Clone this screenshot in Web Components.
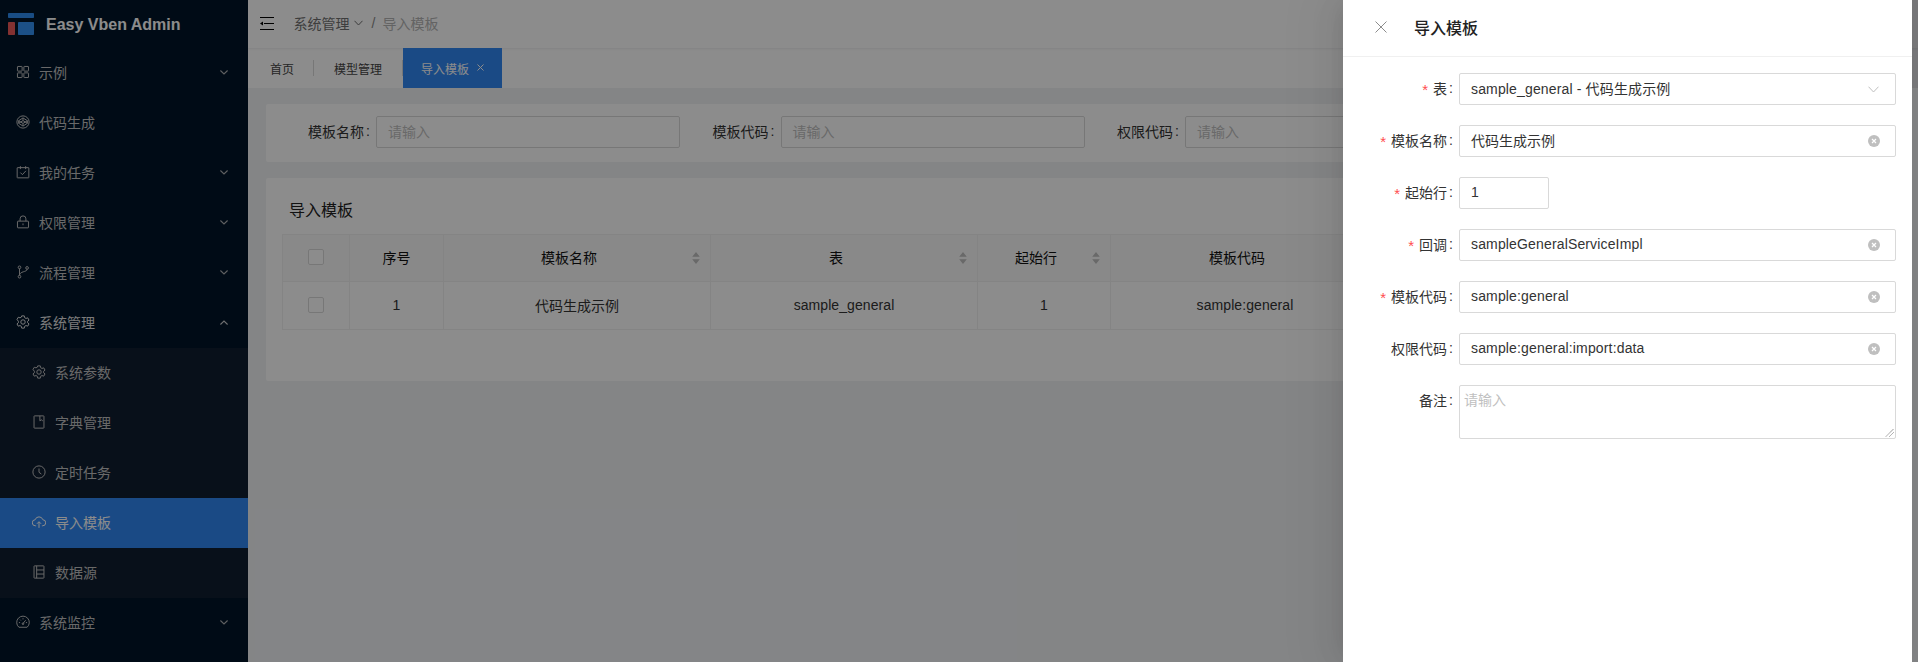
<!DOCTYPE html>
<html lang="zh-CN">
<head>
<meta charset="utf-8">
<title>导入模板</title>
<style>
html,body{margin:0;padding:0;height:662px;overflow:hidden}
body{font-family:"Liberation Sans","Noto Sans CJK SC",sans-serif;font-size:14px;color:rgba(0,0,0,.85)}
</style>
</head>
<body>
<x-app>
  <x-sidebar slot="side">
    <x-menu-item icon="apps" arrow="down">示例</x-menu-item>
    <x-menu-item icon="codepen">代码生成</x-menu-item>
    <x-menu-item icon="task" arrow="down">我的任务</x-menu-item>
    <x-menu-item icon="lock" arrow="down">权限管理</x-menu-item>
    <x-menu-item icon="branch" arrow="down">流程管理</x-menu-item>
    <x-menu-item icon="gear" arrow="up" open>系统管理</x-menu-item>
    <x-submenu>
      <x-menu-item sub icon="gear">系统参数</x-menu-item>
      <x-menu-item sub icon="book">字典管理</x-menu-item>
      <x-menu-item sub icon="clock">定时任务</x-menu-item>
      <x-menu-item sub active icon="cloud">导入模板</x-menu-item>
      <x-menu-item sub icon="table">数据源</x-menu-item>
    </x-submenu>
    <x-menu-item icon="gauge" arrow="down">系统监控</x-menu-item>
  </x-sidebar>
  <x-topbar slot="main"></x-topbar>
  <x-tabs slot="main"></x-tabs>
  <x-content slot="main">
    <x-search-card></x-search-card>
    <x-table-card></x-table-card>
  </x-content>
  <x-drawer slot="over" heading="导入模板">
    <x-field label="表" required><x-input spaced value="sample_general - 代码生成示例" end="chevron"></x-input></x-field>
    <x-field label="模板名称" required><x-input value="代码生成示例" end="clear"></x-input></x-field>
    <x-field label="起始行" required><x-input value="1" narrow></x-input></x-field>
    <x-field label="回调" required><x-input spaced value="sampleGeneralServiceImpl" end="clear"></x-input></x-field>
    <x-field label="模板代码" required><x-input spaced value="sample:general" end="clear"></x-input></x-field>
    <x-field label="权限代码"><x-input spaced value="sample:general:import:data" end="clear"></x-input></x-field>
    <x-field label="备注"><x-textarea placeholder="请输入"></x-textarea></x-field>
  </x-drawer>
</x-app>
<script>
const ICONS = {
  apps:'<rect x="2.500" y="2.500" width="8" height="8" rx=".8"/><rect x="13.500" y="2.500" width="8" height="8" rx=".8"/><rect x="2.500" y="13.500" width="8" height="8" rx=".8"/><rect x="13.500" y="13.500" width="8" height="8" rx=".8"/>',
  codepen:'<circle cx="12" cy="12" r="10.500"/><path d="M12 5l7.500 4.800v4.400L12 19l-7.500-4.800V9.800z"/><path d="M4.500 9.800L12 14.500l7.500-4.700M12 5v4.500L4.500 14.200M12 9.500l7.500 4.700M12 14.500V19"/>',
  task:'<rect x="2" y="4.500" width="20" height="17.500" rx=".6"/><path d="M7.500 2v5M16.500 2v5M7.500 13l3.500 3.500 6-6.500"/>',
  lock:'<rect x="2.500" y="10.500" width="19" height="11.500" rx="1"/><path d="M7 10.500V6.500a5 5 0 0 1 10 0v4M12 14.500v3"/>',
  branch:'<circle cx="6" cy="4" r="2.300"/><circle cx="6" cy="20" r="2.300"/><circle cx="19" cy="5" r="2.300"/><path d="M6 6.300v11.400M19 7.300c0 5-13 3.200-13 10.400"/>',
  gear:'<path d="M9.800 1.500h4.400l.6 3.100 2.300 1.300 3-1 2.200 3.800-2.400 2.100v2.400l2.400 2.100-2.200 3.800-3-1-2.300 1.300-.6 3.100H9.800l-.6-3.100-2.300-1.300-3 1-2.200-3.800 2.400-2.100v-2.400L1.700 7.700l2.200-3.800 3 1 2.300-1.300z"/><circle cx="12" cy="12" r="3.800"/>',
  book:'<rect x="3.500" y="1.500" width="17" height="21" rx=".8"/><path d="M13.500 1.500v8.500l2.500-1.800 2.500 1.800"/>',
  clock:'<circle cx="12" cy="12" r="10.500"/><path d="M12 6v6.500l4 3"/>',
  cloud:'<path d="M7 18.500H6A5.200 5.200 0 0 1 5.400 8.100 6.900 6.900 0 0 1 18.600 8.100 5.200 5.200 0 0 1 18 18.500h-1"/><path d="M12 22V12M8.500 15l3.500-3.500 3.500 3.500"/>',
  table:'<rect x="3.500" y="1.500" width="17" height="21" rx=".8"/><path d="M8 1.500v21M8 8.500h12.500M8 15.500h12.500"/>',
  gauge:'<path d="M5 21A10.800 10.800 0 1 1 19 21z"/><path d="M12 14.500l4.500-5.500M5 13h2M17 13h2M12 5.500v2M7 8l1.300 1.300"/><circle cx="12" cy="15" r="1.400"/>'
};
const STYLE_RESET = ':host,*{box-sizing:border-box}';
function define(name, css, html, init){
  customElements.define(name, class extends HTMLElement{
    connectedCallback(){
      if(this.shadowRoot) return;
      const r=this.attachShadow({mode:'open'});
      r.innerHTML='<style>'+STYLE_RESET+css+'</style>'+(typeof html==='function'?html(this):html);
      if(init) init(this,r);
    }
  });
}
const sorter='<svg width="8" height="12" viewBox="0 0 8 12" style="display:block"><path d="M4 0l3.800 4.800H.2zM4 12L.2 7.200h7.600z" fill="#bfbfbf"/></svg>';
define('x-app',`
  :host{display:block;position:relative;width:1918px;height:662px;overflow:hidden}
  .shell{display:flex;height:100%}
  .main{flex:1;min-width:0;display:flex;flex-direction:column;background:#f0f2f5}
  .mask{position:absolute;inset:0;background:rgba(0,0,0,.45)}
`,`<div class="shell"><slot name="side"></slot><div class="main"><slot name="main"></slot></div></div><div class="mask"></div><slot name="over"></slot>`);
define('x-sidebar',`
  :host{display:block;width:248px;flex:none;height:100%;background:#001529;overflow:hidden}
  .logo{height:48px;display:flex;align-items:center;padding-left:8px;gap:12px;color:#fff;font-size:16px;font-weight:700;white-space:nowrap}
  .logo span{position:relative;top:1px}
  svg{display:block}
`,`<div class="logo"><svg width="26" height="23" viewBox="0 0 26 23" style="margin-top:1px"><rect width="26" height="5" rx=".8" fill="#2f8cf0"/><rect y="9" width="7" height="13" rx=".8" fill="#ef5a5a"/><rect x="10" y="9" width="16" height="13" rx=".8" fill="#3392f5"/></svg><span>Easy Vben Admin</span></div><slot></slot>`);
define('x-submenu',`:host{display:block;background:#101e30}`,`<slot></slot>`);
define('x-menu-item',`
  :host{display:flex;align-items:center;height:50px;padding:0 20px 2px 16px;color:#c0c0c0;white-space:nowrap}
  :host([sub]){padding-left:32px}
  :host([open]){color:#e0e0e0}
  :host([active]){background:#3188f2;color:#fff}
  .i{width:14px;height:14px;flex:none;fill:none;stroke:currentColor;stroke-width:1.700;stroke-linejoin:round;margin-right:9px}
  .t{flex:1}
  .a{width:8px;height:5px;flex:none;fill:none;stroke:currentColor;stroke-width:1.100;opacity:.9}
`,h=>{
  const arrow=h.getAttribute('arrow');
  const a=arrow?`<svg class="a" viewBox="0 0 8 5">${arrow==='up'?'<path d="M.4 4.500L4 1l3.600 3.500"/>':'<path d="M.4.500L4 4l3.600-3.500"/>'}</svg>`:'';
  return `<svg class="i" viewBox="0 0 24 24">${ICONS[h.getAttribute('icon')]||''}</svg><span class="t"><slot></slot></span>${a}`;
});
define('x-topbar',`
  :host{display:flex;align-items:center;height:48px;flex:none;background:linear-gradient(to left,#dcdce0 6px,#fff 6px);padding:0 0 2px 12px;font-size:14px;box-shadow:0 1px 2px rgba(0,21,41,.08);position:relative;white-space:nowrap}
  svg{display:block;flex:none}
  .fold{margin-right:19.500px}
  .c{color:#6f6f6f}.last{color:#b4b4b4}
  .chev{margin:0 5px 0 4px;color:#6f6f6f}
  .sep{color:#8a8a8a;margin:0 7px 0 4px}
`,`<svg class="fold" width="14" height="13" viewBox="0 0 14 13"><path d="M0 .5h14M4 6.500h10M0 12.500h14" stroke="#000" stroke-width="1.200" fill="none"/><path d="M0 6.500L3 4.500v4z" fill="#000"/></svg><span class="c">系统管理</span><svg class="chev" width="9" height="6" viewBox="0 0 9 6"><path d="M.5.800L4.500 5l4-4.200" fill="none" stroke="currentColor"/></svg><span class="sep">/</span><span class="last">导入模板</span>`);
define('x-tabs',`
  :host{display:flex;height:40px;flex:none;background:linear-gradient(to left,#dcdce0 6px,#fff 6px);font-size:12px;white-space:nowrap;padding-left:1px}
  .t{display:flex;align-items:center;position:relative;color:#454545}
  .a{width:65px;padding-left:21px}
  .b{width:89px;padding-left:20px}
  .t.a::after,.t.b::after{content:"";position:absolute;right:0;top:12px;height:16px;width:1px;background:#d9d9d9}
  .on{width:99px;padding-left:18px;background:#3188f2;color:#fff;gap:8px}
  .x{width:7px;height:7px;display:block;margin-top:-2px}
`,`<div class="t a">首页</div><div class="t b">模型管理</div><div class="t on">导入模板<svg class="x" viewBox="0 0 7 7"><path d="M.5.500l6 6M6.500.500l-6 6" stroke="#fff" fill="none"/></svg></div>`);
define('x-content',`:host{display:flex;flex-direction:column;gap:16px;padding:16px 6px 0 18px;flex:1;min-height:0}`,`<slot></slot>`);
define('x-search-card',`
  :host{display:grid;grid-template-columns:repeat(4,398px);column-gap:6.500px;height:58px;flex:none;background:#fff;padding:12px 16px;border-radius:2px;overflow:hidden}
  .f{display:flex;align-items:stretch;height:32px;white-space:nowrap}
  label{width:94px;flex:none;display:flex;align-items:center;justify-content:flex-end;color:#333;padding-bottom:2px}
  label i{font-style:normal;margin:0 6px 0 2px}
  .in{width:304px;border:1px solid #d9d9d9;border-radius:2px;display:flex;align-items:center;padding:0 11px 2px;color:#bfbfbf;background:#fff}
`,`<div class="f"><label>模板名称<i>:</i></label><div class="in">请输入</div></div><div class="f"><label>模板代码<i>:</i></label><div class="in">请输入</div></div><div class="f"><label>权限代码<i>:</i></label><div class="in">请输入</div></div>`);
define('x-table-card',`
  :host{display:block;height:203px;flex:none;background:#fff;padding:0 16px;border-radius:2px;overflow:hidden}
  h3{margin:0;height:56px;display:flex;align-items:center;padding:7px 0 2px 7px;font-size:16px;font-weight:400;color:#222}
  .g{display:grid;grid-template-columns:67px 94px 267px 267px 133px 269px 1fr;grid-template-rows:47px 48px;border:solid #f0f0f0;border-width:1px 0 0 1px;color:#333;white-space:nowrap}
  .g>div{display:flex;align-items:center;justify-content:center;border:solid #f0f0f0;border-width:0 1px 1px 0;position:relative;padding-bottom:1px}
  .g>div.h{background:#fafafa;color:#111;padding-bottom:2px}
  .g>div.s{padding-right:16px}
  .g>div.l{letter-spacing:.08px}
  .s svg{position:absolute;right:10px;top:17px}
  .cb{width:16px;height:16px;border:1px solid #d9d9d9;border-radius:2px;background:#fff;display:block}
`,`<h3>导入模板</h3><div class="g">
  <div class="h"><span class="cb"></span></div><div class="h">序号</div><div class="h s">模板名称${sorter}</div><div class="h s">表${sorter}</div><div class="h s">起始行${sorter}</div><div class="h s">模板代码${sorter}</div><div class="h"></div>
  <div><span class="cb"></span></div><div>1</div><div>代码生成示例</div><div class="l">sample_general</div><div>1</div><div class="l">sample:general</div><div></div>
</div>`);
define('x-drawer',`
  :host{display:flex;flex-direction:column;position:absolute;top:0;right:6px;bottom:0;width:569px;background:#fff;box-shadow:-6px 0 16px -8px rgba(0,0,0,.08),-9px 0 28px 0 rgba(0,0,0,.05),-12px 0 48px 16px rgba(0,0,0,.03)}
  header{height:57px;flex:none;display:flex;align-items:center;padding:0 0 2px 32px;border-bottom:1px solid #f0f0f0;font-size:16px;font-weight:500;color:#222;gap:27px}
  header svg{display:block;width:12px;height:12px}
  .b{padding:16px;display:flex;flex-direction:column;gap:20px}
`,h=>`<header><svg viewBox="0 0 12 12"><path d="M.5.500l11 11M11.500.500l-11 11" stroke="#8c8c8c" fill="none"/></svg><span>${h.getAttribute('heading')}</span></header><div class="b"><slot></slot></div>`);
define('x-field',`
  :host{display:flex;align-items:flex-start}
  label{width:100px;flex:none;height:32px;display:flex;align-items:center;justify-content:flex-end;color:#333;white-space:nowrap;padding-bottom:2px}
  b{font-weight:400;color:#ff4d4f;margin-right:5px;font-size:15px;position:relative;top:1px}
  i{font-style:normal;margin:0 6px 0 2px}
  .w{flex:1;min-width:0}
`,h=>`<label>${h.hasAttribute('required')?'<b>*</b>':''}${h.getAttribute('label')}<i>:</i></label><div class="w"><slot></slot></div>`);
define('x-input',`
  :host{display:flex;align-items:center;height:32px;border:1px solid #d9d9d9;border-radius:2px;padding:0 11px;color:#333;background:#fff;white-space:nowrap}
  :host([narrow]){width:90px}
  :host([spaced]) .v{letter-spacing:.15px}
  .v{flex:1;min-width:0;position:relative;top:-1px}
  svg{display:block;flex:none}
  .clear{margin-right:4px;}
  .chev{margin-right:5px}
`,h=>{
  const e=h.getAttribute('end');
  const end=e==='clear'?'<svg class="clear" width="12" height="12" viewBox="0 0 12 12"><circle cx="6" cy="6" r="6" fill="#bfbfbf"/><path d="M4 4l4 4M8 4l-4 4" stroke="#fff" stroke-width="1.200"/></svg>':
    e==='chevron'?'<svg class="chev" width="11" height="7" viewBox="0 0 11 7"><path d="M.5.700L5.500 6l5-5.300" fill="none" stroke="#bfbfbf"/></svg>':'';
  return `<span class="v">${h.getAttribute('value')}</span>${end}`;
});
define('x-textarea',`
  :host{display:block;position:relative;height:54px;border:1px solid #d9d9d9;border-radius:2px;padding:3px 4px;color:#bfbfbf;background:#fff;line-height:22px}
  svg{position:absolute;right:1px;bottom:1px;display:block}
`,h=>`${h.getAttribute('placeholder')}<svg width="9" height="9" viewBox="0 0 9 9"><path d="M1 8.500L8.500 1M4.500 8.500L8.500 4.500" stroke="#6e6e6e" stroke-dasharray="1 .6" fill="none"/></svg>`);
</script>
</body>
</html>
